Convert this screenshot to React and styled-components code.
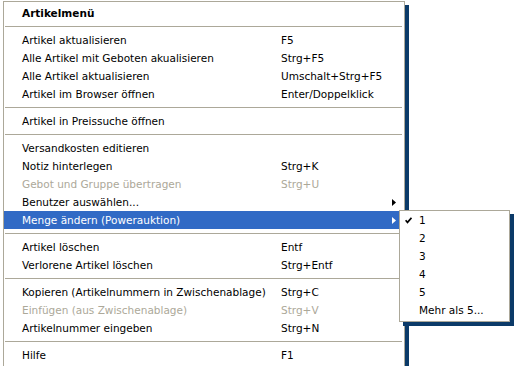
import React from 'react';
import styled, { createGlobalStyle } from 'styled-components';

const Global = createGlobalStyle`
  html, body { margin: 0; padding: 0; background: #fff; }
  body {
    font-family: "DejaVu Sans", Verdana, sans-serif;
    font-size: 10.5px;
    color: #000;
  }
`;

const Stage = styled.div`
  position: relative;
  width: 514px;
  height: 366px;
  overflow: hidden;
  box-sizing: border-box;
  padding: 1px 0 0 3px;
`;

const Menu = styled.div`
  position: relative;
  width: 402px;
  box-sizing: border-box;
  border: 1px solid #aca899;
  background: #fff;
  box-shadow: 4px 4px 0 #0b3a68;
  padding: 2px 0 3px;
`;

const Row = styled.div`
  position: relative;
  display: grid;
  grid-template-columns: 259px 1fr 12px;
  align-items: center;
  height: 18px;
  line-height: 18px;
  padding: 0 3px 0 18px;
  white-space: nowrap;
  font-weight: ${p => (p.$header ? 'bold' : 'normal')};
  background: ${p => (p.$active ? '#316ac5' : 'transparent')};
  color: ${p => (p.$active ? '#fff' : p.$disabled ? '#aca899' : '#000')};
`;

const Shortcut = styled.span``;

const Arrow = styled.svg`
  display: block;
  width: 4px;
  height: 7px;
  margin-left: 3px;
  fill: currentColor;
`;

const Sep = styled.div`
  height: 1px;
  background: #aca899;
  margin: 4px 2px 4px 1px;
`;

const Submenu = styled.div`
  position: absolute;
  top: -1px;
  left: 395px;
  width: 111px;
  box-sizing: border-box;
  border: 1px solid #aca899;
  background: #fff;
  color: #000;
  font-weight: normal;
  box-shadow: 4px 4px 0 #0b3a68;
  padding: 0 0 2px;
`;

const SubRow = styled.div`
  display: grid;
  grid-template-columns: 19px 1fr;
  align-items: center;
  height: 18px;
  line-height: 18px;
  white-space: nowrap;
`;

const Check = styled.svg`
  display: block;
  width: 7px;
  height: 7px;
  margin-left: 5px;
`;

const items = [
  { type: 'header', label: 'Artikelmenü' },
  { type: 'sep' },
  { label: 'Artikel aktualisieren', key: 'F5' },
  { label: 'Alle Artikel mit Geboten akualisieren', key: 'Strg+F5' },
  { label: 'Alle Artikel aktualisieren', key: 'Umschalt+Strg+F5' },
  { label: 'Artikel im Browser öffnen', key: 'Enter/Doppelklick' },
  { type: 'sep' },
  { label: 'Artikel in Preissuche öffnen' },
  { type: 'sep' },
  { label: 'Versandkosten editieren' },
  { label: 'Notiz hinterlegen', key: 'Strg+K' },
  { label: 'Gebot und Gruppe übertragen', key: 'Strg+U', disabled: true },
  { label: 'Benutzer auswählen...', sub: true },
  { label: 'Menge ändern (Powerauktion)', sub: true, active: true, open: true },
  { type: 'sep' },
  { label: 'Artikel löschen', key: 'Entf' },
  { label: 'Verlorene Artikel löschen', key: 'Strg+Entf' },
  { type: 'sep' },
  { label: 'Kopieren (Artikelnummern in Zwischenablage)', key: 'Strg+C' },
  { label: 'Einfügen (aus Zwischenablage)', key: 'Strg+V', disabled: true },
  { label: 'Artikelnummer eingeben', key: 'Strg+N' },
  { type: 'sep' },
  { label: 'Hilfe', key: 'F1' },
];

const subItems = [
  { label: '1', checked: true },
  { label: '2' },
  { label: '3' },
  { label: '4' },
  { label: '5' },
  { label: 'Mehr als 5...' },
];

function SubMenu() {
  return (
    <Submenu>
      {subItems.map((s, i) => (
        <SubRow key={i}>
          <span>
            {s.checked && (
              <Check viewBox="0 0 7 7">
                <path d="M0.6 3.2 L2.5 5.4 L6.5 0.8" fill="none" stroke="#000" strokeWidth="1.7" />
              </Check>
            )}
          </span>
          <span>{s.label}</span>
        </SubRow>
      ))}
    </Submenu>
  );
}

export default function App() {
  return (
    <>
      <Global />
      <Stage>
        <Menu>
          {items.map((it, i) => {
            if (it.type === 'sep') return <Sep key={i} />;
            return (
              <Row
                key={i}
                $header={it.type === 'header'}
                $active={it.active}
                $disabled={it.disabled}
              >
                <span>{it.label}</span>
                <Shortcut>{it.key || ''}</Shortcut>
                <span>
                  {it.sub && (
                    <Arrow viewBox="0 0 4 7">
                      <path d="M0 0 L4 3.5 L0 7 Z" />
                    </Arrow>
                  )}
                </span>
                {it.open && <SubMenu />}
              </Row>
            );
          })}
        </Menu>
      </Stage>
    </>
  );
}
